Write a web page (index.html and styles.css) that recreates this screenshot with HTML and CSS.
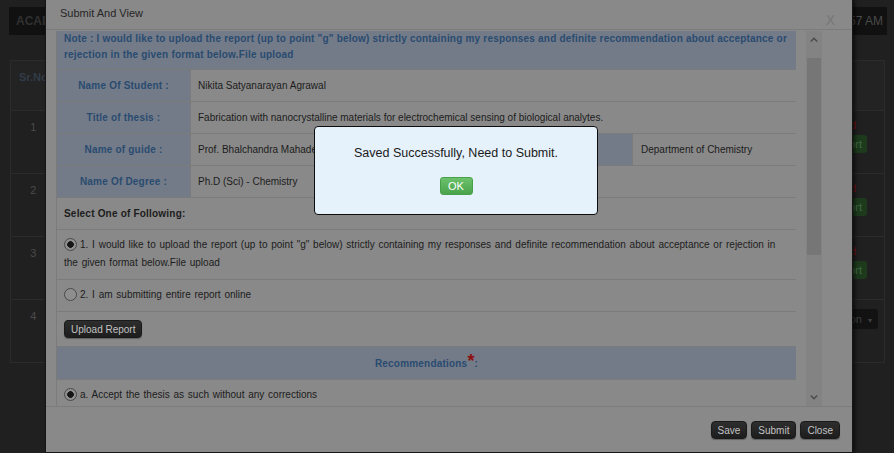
FILE: index.html
```html
<!DOCTYPE html>
<html lang="en">

<head>
    <meta charset="UTF-8">
    <meta name="viewport" content="width=device-width, initial-scale=1.0">
    <title>Thesis Report</title>

    <link rel="stylesheet" href="styles.css">
</head>

<body>
    <div class="page">
        <header class="topbar">
            <div class="brand">ACADEMIC SECTION</div>
            <div class="clock">10:48:57 AM</div>
        </header>

        <table class="list">
            <tr class="list-head">
                <th class="c-no">Sr.No</th>
                <th></th>
                <th></th>
                <th class="c-act"></th>
            </tr>
            <tr>
                <td class="c-no">1</td>
                <td></td>
                <td></td>
                <td class="c-act"><span class="state">Submitted</span><button class="btn-go">Report</button></td>
            </tr>
            <tr>
                <td class="c-no">2</td>
                <td></td>
                <td></td>
                <td class="c-act"><span class="state">Submitted</span><button class="btn-go">Report</button></td>
            </tr>
            <tr>
                <td class="c-no">3</td>
                <td></td>
                <td></td>
                <td class="c-act"><span class="state">Submitted</span><button class="btn-go">Report</button></td>
            </tr>
            <tr>
                <td class="c-no">4</td>
                <td></td>
                <td></td>
                <td class="c-act"><button class="btn-menu">Action <span class="caret">&#9662;</span></button></td>
            </tr>
        </table>
    </div>

    <!-- report dialog -->
    <div class="dialog">
        <div class="dialog-head">
            <span>Submit And View</span>
            <span class="dialog-close">X</span>
        </div>

        <div class="dialog-body">
            <div class="sheet">
                <table class="form">
                    <colgroup>
                        <col class="w-lbl">
                        <col class="w-val">
                        <col class="w-lbl2">
                        <col class="w-val2">
                    </colgroup>
                    <tr>
                        <td colspan="4" class="note">Note : I would like to upload the report (up to point "g" below) strictly containing my responses and definite recommendation about acceptance or rejection in the given format below.File upload</td>
                    </tr>
                    <tr>
                        <td class="lbl">Name Of Student :</td>
                        <td colspan="3">Nikita Satyanarayan Agrawal</td>
                    </tr>
                    <tr>
                        <td class="lbl">Title of thesis :</td>
                        <td colspan="3">Fabrication with nanocrystalline materials for electrochemical sensing of biological analytes.</td>
                    </tr>
                    <tr>
                        <td class="lbl">Name of guide :</td>
                        <td>Prof. Bhalchandra Mahadeo</td>
                        <td class="lbl"></td>
                        <td class="dept">Department of Chemistry</td>
                    </tr>
                    <tr>
                        <td class="lbl">Name Of Degree :</td>
                        <td colspan="3">Ph.D (Sci) - Chemistry</td>
                    </tr>
                    <tr>
                        <td colspan="4" class="pick">Select One of Following:</td>
                    </tr>
                    <tr>
                        <td colspan="4" class="opt"><input type="radio" class="radio" name="mode" checked>1. I would like to upload the report (up to point "g" below) strictly containing my responses and definite recommendation about acceptance or rejection in the given format below.File upload</td>
                    </tr>
                    <tr>
                        <td colspan="4" class="opt"><input type="radio" class="radio" name="mode">2. I am submitting entire report online</td>
                    </tr>
                    <tr>
                        <td colspan="4" class="upload"><button class="btn">Upload Report</button></td>
                    </tr>
                    <tr>
                        <td colspan="4" class="lbl rec">Recommendations<span class="req">*</span>:</td>
                    </tr>
                    <tr>
                        <td colspan="4" class="opt last"><input type="radio" class="radio" name="rec" checked>a. Accept the thesis as such without any corrections</td>
                    </tr>
                </table>
            </div>

            <div class="scroll">
                <div class="scroll-btn">
                    <svg width="8" height="5" viewBox="0 0 8 5"><path d="M0.8 4.4 L4 1.2 L7.2 4.4" fill="none" stroke="#4a4a4a" stroke-width="1.4"/></svg>
                </div>
                <div class="scroll-thumb"></div>
                <div class="scroll-btn bottom">
                    <svg width="8" height="5" viewBox="0 0 8 5"><path d="M0.8 0.6 L4 3.8 L7.2 0.6" fill="none" stroke="#4a4a4a" stroke-width="1.4"/></svg>
                </div>
            </div>
        </div>

        <div class="dialog-foot">
            <button class="btn">Save</button>
            <button class="btn">Submit</button>
            <button class="btn">Close</button>
        </div>
    </div>

    <!-- alert box -->
    <div class="alert">
        <p>Saved Successfully, Need to Submit.</p>
        <button class="ok">OK</button>
    </div>
</body>

</html>
```

FILE: styles.css
```css
* {
    padding: 0;
    margin: 0;
    box-sizing: border-box;
}

body {
    font-family: "Liberation Sans", Arial, sans-serif;
    font-size: 10px;
    background-color: #202020;
    height: 453px;
    overflow: hidden;
    position: relative;
}

button {
    font-family: "Liberation Sans", Arial, sans-serif;
    cursor: pointer;
}

/* page behind the dialog */

.topbar {
    display: flex;
    justify-content: space-between;
    padding: 7px 7px 0 9px;
}

.brand,
.clock {
    height: 28px;
    line-height: 28px;
    background-color: #111;
    font-size: 12px;
}

.brand {
    width: 300px;
    padding: 0 7px;
    color: #303030;
    font-weight: bold;
}

.clock {
    padding: 0 4px 0 6px;
    color: #4a4a4a;
}

.list {
    margin: 25px 0 0 10px;
    width: 875px;
    border-collapse: collapse;
    border: 1px solid #2b2b2b;
}

.list th,
.list td {
    border-top: 1px solid #2b2b2b;
    vertical-align: top;
    text-align: left;
    font-size: 11px;
}

.list-head th {
    height: 50px;
    padding: 14px 7px 0;
    background-color: #232323;
    color: #323c47;
}

.list td {
    height: 63px;
    color: #4a4a4a;
}

.list .c-no {
    width: 45px;
    text-align: center;
    padding-top: 10px;
}

.list .c-act {
    width: 105px;
    padding-top: 8px;
}

.state {
    display: block;
    text-align: right;
    padding-right: 28px;
    color: #7a1212;
}

.btn-go {
    display: block;
    margin: 4px 17px 0 auto;
    height: 18px;
    padding: 0 5px;
    border: none;
    border-radius: 3px;
    background-color: #1d3a1d;
    color: #3f6a3f;
    font-size: 11px;
}

.btn-menu {
    display: block;
    margin: 1px 6px 0 auto;
    height: 20px;
    padding: 0 6px;
    border: none;
    border-radius: 3px;
    background-color: #121212;
    color: #404040;
    font-size: 11px;
}

.caret {
    font-size: 8px;
    margin-left: 3px;
}

/* dialog */

.dialog {
    position: absolute;
    top: 0;
    left: 45px;
    width: 808px;
    height: 453px;
    display: flex;
    flex-direction: column;
    background-color: #898989;
    border: 1px solid #151515;
    border-top: none;
    box-shadow: 2px 0 4px rgba(0, 0, 0, .6);
}

.dialog-head {
    height: 30px;
    flex: 0 0 30px;
    display: flex;
    justify-content: space-between;
    align-items: center;
    padding: 0 17px 3px 14px;
    border-bottom: 1px solid #7b7b7b;
    color: #262626;
    font-size: 11px;
}

.dialog-close {
    margin-top: 13px;
    font-size: 14px;
    color: #777;
}

.dialog-body {
    flex: 0 0 376px;
    display: flex;
    padding-left: 10px;
    overflow: hidden;
}

.sheet {
    width: 740px;
    margin-top: 1px;
    overflow: hidden;
}

.form {
    width: 100%;
    border-collapse: collapse;
    table-layout: fixed;
}

.w-lbl {
    width: 134px;
}

.w-val {
    width: 280px;
}

.w-lbl2 {
    width: 162px;
}

.w-val2 {
    width: 164px;
}

.form td {
    height: 32px;
    padding: 0 7px;
    border: 1px solid #7b7b7b;
    border-top: none;
    color: #1c1c1c;
    vertical-align: middle;
}

.form .note {
    height: 38px;
    padding: 0 7px 6px;
    line-height: 16px;
    background-color: #737b88;
    color: #2a4b70;
    font-weight: bold;
    letter-spacing: .2px;
    vertical-align: top;
}

.form .lbl {
    background-color: #737b88;
    color: #2a4b70;
    font-weight: bold;
    letter-spacing: .2px;
    text-align: center;
}

.form .dept {
    padding-left: 8px;
}

.form .pick {
    font-weight: bold;
    letter-spacing: .2px;
}

.form .opt {
    padding: 6px 7px 7px;
    line-height: 18px;
    word-spacing: 1px;
}

.form .last {
    height: 40px;
    vertical-align: top;
}

.form .upload {
    height: 35px;
}

.form .rec {
    height: 33px;
}

.req {
    color: #8c1010;
    font-size: 18px;
    line-height: 0;
    vertical-align: 0;
}

.radio {
    appearance: none;
    width: 13px;
    height: 13px;
    margin: 0 3px 0 0;
    vertical-align: -3px;
    border: 1px solid #4a4a4a;
    border-radius: 50%;
    background-color: #8e8e8e;
}

.radio:checked {
    background: radial-gradient(circle, #161616 0 3px, #8e8e8e 3.6px);
}

.btn {
    height: 18px;
    padding: 0 6px;
    border: 1px solid #1a1a1a;
    border-radius: 4px;
    background: linear-gradient(#2e2e2e, #1d1d1d);
    color: #c2c2c2;
    font-size: 10px;
    box-shadow: 0 1px 1px rgba(0, 0, 0, .3);
}

.scroll {
    width: 16px;
    margin: 1px 0 0 10px;
    display: flex;
    flex-direction: column;
    align-items: center;
    background-color: #838383;
}

.scroll-btn {
    height: 17px;
    display: flex;
    align-items: center;
    justify-content: center;
}

.scroll-btn.bottom {
    margin-top: auto;
}

.scroll-thumb {
    width: 14px;
    height: 197px;
    margin-top: 10px;
    background-color: #767676;
}

.dialog-foot {
    flex: 1;
    display: flex;
    justify-content: flex-end;
    align-items: flex-start;
    gap: 4px;
    padding: 14px 12px 0 0;
    border-top: 1px solid #7b7b7b;
}

/* alert */

.alert {
    position: absolute;
    left: 314px;
    top: 126px;
    width: 284px;
    height: 89px;
    display: flex;
    flex-direction: column;
    align-items: center;
    padding-top: 19px;
    background-color: #e6f2fb;
    border: 1px solid #0d0d0d;
    border-radius: 4px;
    color: #1a1a1a;
    font-size: 12.5px;
}

.ok {
    width: 33px;
    height: 18px;
    margin-top: 17px;
    border: 1px solid #48a048;
    border-radius: 3px;
    background: linear-gradient(#6cc26c, #4aa34a);
    color: #fff;
    font-size: 11px;
}
```
